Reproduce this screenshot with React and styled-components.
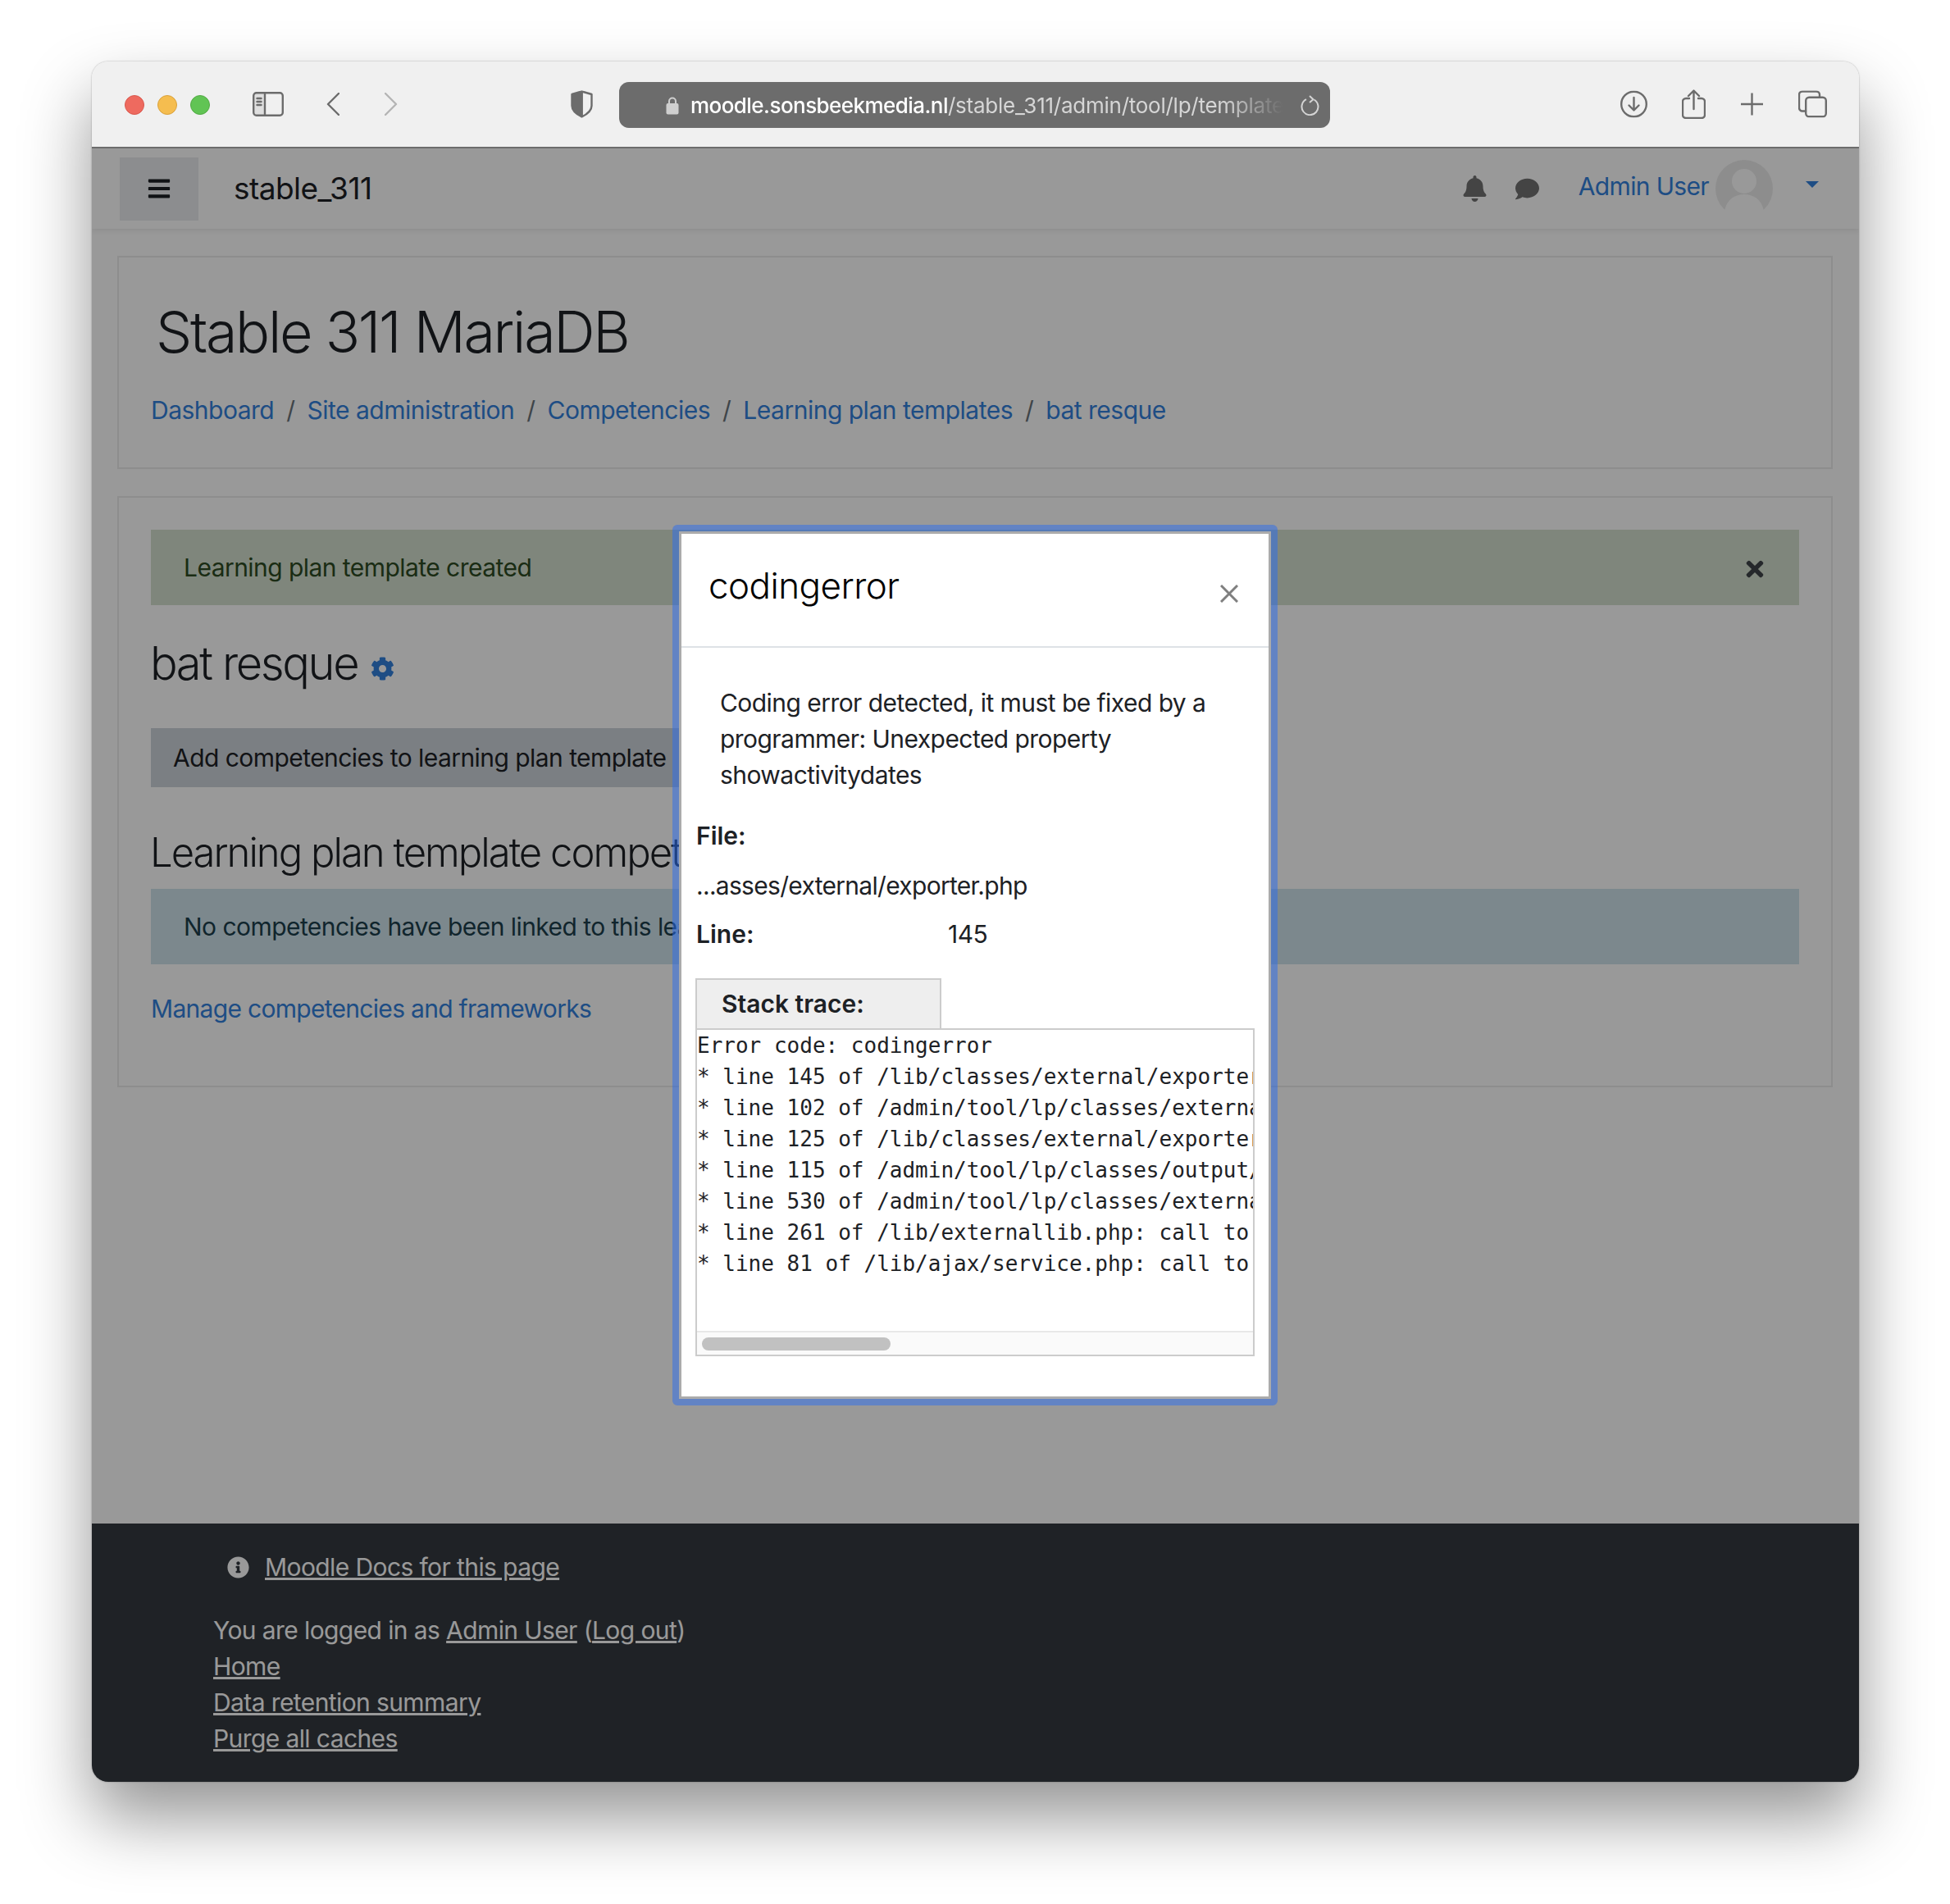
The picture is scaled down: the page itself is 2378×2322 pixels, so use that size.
import React from "react";
import styled, { createGlobalStyle } from "styled-components";
import { FaBars, FaBell, FaCog, FaComment, FaInfoCircle, FaTimes } from "react-icons/fa";

const GlobalStyle = createGlobalStyle`
  html, body {
    margin: 0;
    background: #ffffff;
  }
  * {
    box-sizing: border-box;
  }
  body {
    font-family: Inter, "Noto Sans", sans-serif;
    font-size: 30px;
    line-height: 44px;
    letter-spacing: -0.55px;
    color: #1d2125;
  }
`;

const crumbs = [
  "Dashboard",
  "Site administration",
  "Competencies",
  "Learning plan templates",
  "bat resque",
];

const traceLines = [
  "Error code: codingerror",
  "* line 145 of /lib/classes/external/exporter.php: call to debugging()",
  "* line 102 of /admin/tool/lp/classes/external/template_exporter.php: call to exporter",
  "* line 125 of /lib/classes/external/exporter.php: call to get_other_values()",
  "* line 115 of /admin/tool/lp/classes/output/manage_templates_page.php: call to export()",
  "* line 530 of /admin/tool/lp/classes/external.php: call to export_for_template()",
  "* line 261 of /lib/externallib.php: call to tool_lp\\external::list_templates()",
  "* line 81 of /lib/ajax/service.php: call to external_api::call_external_function()",
];

const App = () => {
  return (
    <Page>
      <GlobalStyle />
      <Window>
        <TitleBar>
          <Lights>
            <Light $color="#ee6a5f" $edge="#d9574d" />
            <Light $color="#f5bd4f" $edge="#d9a13c" />
            <Light $color="#61c454" $edge="#52a944" />
          </Lights>
          <ChromeIcon width="38" height="30" viewBox="0 0 38 30" $left={308}>
            <rect x="1.2" y="1.2" width="35.6" height="27.6" rx="3.5" />
            <path d="M1.2 4.5a3.3 3.3 0 0 1 3.3-3.3H15v27.6H4.5a3.3 3.3 0 0 1-3.3-3.3z" fill="#6c6c6c" fillOpacity=".12" stroke="none" />
            <path d="M15 1.2v27.6M5.5 8h5M5.5 12h5M5.5 16h5" />
          </ChromeIcon>
          <ChromeIcon width="16" height="28" viewBox="0 0 16 28" $left={398}>
            <path d="M15 1 2 14l13 13" />
          </ChromeIcon>
          <ChromeIcon width="16" height="28" viewBox="0 0 16 28" $left={469} $faded>
            <path d="m1 1 13 13L1 27" />
          </ChromeIcon>
          <ChromeIcon width="27" height="33" viewBox="0 0 27 33" $left={696}>
            <path d="M13.5 1 1.5 4.5v14c0 6 6 10.500 12 13.500z" fill="#6c6c6c" />
            <path d="M13.500 1l12 3.500v14c0 6-6 10.500-12 13.500z" />
          </ChromeIcon>
          <UrlBar>
            <LockIcon width="16" height="23" viewBox="0 0 16 23">
              <path d="M4 10V6.500a4 4 0 0 1 8 0V10" fill="none" stroke="#cfcfcf" strokeWidth="2" />
              <rect x="0.500" y="9" width="15" height="13.500" rx="2" fill="#cfcfcf" />
            </LockIcon>
            <UrlText>
              <UrlHost>moodle.sonsbeekmedia.nl</UrlHost>/stable_311/admin/tool/lp/templatecompetencies.php
            </UrlText>
            <ReloadIcon width="24" height="25" viewBox="0 0 24 25">
              <path d="M16.500 5.500A10 10 0 1 1 7 5.200" fill="none" stroke="#d4d4d4" strokeWidth="2" />
              <path d="m11 1 4.500 4.200L11 9" fill="none" stroke="#d4d4d4" strokeWidth="2" />
            </ReloadIcon>
          </UrlBar>
          <ChromeIcon width="33" height="33" viewBox="0 0 33 33" $left={1976}>
            <circle cx="16.500" cy="16.500" r="15.300" />
            <path d="M16.500 8.500v15M10.500 18l6 6 6-6" />
          </ChromeIcon>
          <ChromeIcon width="29" height="36" viewBox="0 0 29 36" $left={2051}>
            <path d="M9 11H5a4 4 0 0 0-4 4v16a4 4 0 0 0 4 4h19a4 4 0 0 0 4-4V15a4 4 0 0 0-4-4h-4" />
            <path d="M14.500 24V2M8 8l6.500-6.500L21 8" />
          </ChromeIcon>
          <ChromeIcon width="27" height="27" viewBox="0 0 27 27" $left={2123}>
            <path d="M13.500 0v27M0 13.500h27" />
          </ChromeIcon>
          <ChromeIcon width="35" height="33" viewBox="0 0 35 33" $left={2193}>
            <path d="M9 25H5a4 4 0 0 1-4-4V5a4 4 0 0 1 4-4h17a4 4 0 0 1 4 4v3" />
            <rect x="9.200" y="8.200" width="24.600" height="23.600" rx="4" />
          </ChromeIcon>
        </TitleBar>
        <Viewport>
          <Navbar>
            <MenuButton>
              <FaBars />
            </MenuButton>
            <Brand>stable_311</Brand>
            <NavRight>
              <NavIcon $width={29} $height={32}>
                <FaBell />
              </NavIcon>
              <NavIcon $width={33} $height={29} $gap={33}>
                <FaComment />
              </NavIcon>
              <UserName>Admin User</UserName>
              <Avatar width="70" height="70" viewBox="0 0 70 70">
                <circle cx="35" cy="35" r="35" fill="#ececec" />
                <circle cx="35" cy="26" r="15" fill="#ffffff" />
                <path d="M11 63c2-14 12-21 24-21s22 7 24 21a35 35 0 0 1-48 0z" fill="#ffffff" />
              </Avatar>
              <Caret />
            </NavRight>
          </Navbar>
          <Main>
            <HeaderCard>
              <SiteTitle>Stable 311 MariaDB</SiteTitle>
              <Breadcrumb>
                {crumbs.map((crumb, index) => (
                  <React.Fragment key={crumb}>
                    {index > 0 && <Separator>/</Separator>}
                    <CrumbLink>{crumb}</CrumbLink>
                  </React.Fragment>
                ))}
              </Breadcrumb>
            </HeaderCard>
            <ContentCard>
              <Alert $bg="#d4dfcf" $color="#2c4a22">
                Learning plan template created
                <AlertClose>
                  <FaTimes />
                </AlertClose>
              </Alert>
              <PlanTitle>
                bat resque
                <CogIcon>
                  <FaCog />
                </CogIcon>
              </PlanTitle>
              <AddButton>Add competencies to learning plan template</AddButton>
              <SectionTitle>Learning plan template competencies</SectionTitle>
              <Alert $bg="#cfe3eb" $color="#1c3f4c">
                No competencies have been linked to this learning plan template.
              </Alert>
              <ManageLink>Manage competencies and frameworks</ManageLink>
            </ContentCard>
          </Main>
          <Footer>
            <DocsRow>
              <FaInfoCircle />
              <FooterLink>Moodle Docs for this page</FooterLink>
            </DocsRow>
            <FooterLine>
              You are logged in as <FooterLink>Admin User</FooterLink> (<FooterLink>Log out</FooterLink>)
            </FooterLine>
            <FooterLine>
              <FooterLink>Home</FooterLink>
            </FooterLine>
            <FooterLine>
              <FooterLink>Data retention summary</FooterLink>
            </FooterLine>
            <FooterLine>
              <FooterLink>Purge all caches</FooterLink>
            </FooterLine>
          </Footer>
          <Backdrop />
          <Modal>
            <ModalInner>
              <ModalHeader>
                <ModalTitle>codingerror</ModalTitle>
                <ModalClose width="22" height="22" viewBox="0 0 22 22">
                  <path d="M1 1l20 20M21 1 1 21" />
                </ModalClose>
              </ModalHeader>
              <ModalBody>
                <Message>
                  Coding error detected, it must be fixed by a programmer: Unexpected property
                  showactivitydates
                </Message>
                <Label>File:</Label>
                <FilePath>...asses/external/exporter.php</FilePath>
                <LineRow>
                  <LineLabel>Line:</LineLabel>
                  145
                </LineRow>
                <TraceTab>Stack trace:</TraceTab>
                <TraceBox>
                  <TraceText>
                    {traceLines.map((line) => (
                      <TraceLine key={line}>{line}</TraceLine>
                    ))}
                  </TraceText>
                  <ScrollTrack>
                    <ScrollThumb />
                  </ScrollTrack>
                </TraceBox>
              </ModalBody>
            </ModalInner>
          </Modal>
        </Viewport>
      </Window>
    </Page>
  );
};

const Page = styled.div`
  width: 2378px;
  height: 2322px;
  padding: 75px 111px 149px 112px;
  overflow: hidden;
  background: #ffffff;
`;
const Window = styled.div`
  display: flex;
  flex-direction: column;
  height: 100%;
  border-radius: 20px;
  overflow: hidden;
  box-shadow: 0 44px 84px rgba(0, 0, 0, 0.42), 0 0 2px rgba(0, 0, 0, 0.35);
`;
const TitleBar = styled.div`
  position: relative;
  flex: none;
  height: 106px;
  background: #f0f0f0;
  border-bottom: 2px solid #6d6d6d;
`;
const Lights = styled.div`
  position: absolute;
  left: 40px;
  top: 41px;
  display: flex;
  gap: 16px;
`;
const Light = styled.span`
  width: 24px;
  height: 24px;
  border-radius: 50%;
  background: ${(p) => p.$color};
  border: 1px solid ${(p) => p.$edge};
`;
const ChromeIcon = styled.svg`
  position: absolute;
  left: ${(p) => p.$left - 112}px;
  top: 50%;
  transform: translateY(-50%);
  fill: none;
  stroke: ${(p) => (p.$faded ? "#b5b5b5" : "#6c6c6c")};
  stroke-width: 2.4;
  stroke-linecap: round;
  stroke-linejoin: round;
`;
const UrlBar = styled.div`
  position: absolute;
  left: 643px;
  top: 25px;
  display: flex;
  align-items: center;
  width: 867px;
  height: 56px;
  padding-left: 57px;
  border-radius: 12px;
  background: #6c6c6c;
`;
const LockIcon = styled.svg`
  flex: none;
`;
const UrlText = styled.div`
  width: 722px;
  margin: 2px 0 0 14px;
  overflow: hidden;
  white-space: nowrap;
  font-size: 26px;
  font-weight: 400;
  letter-spacing: -0.25px;
  color: #d6d6d6;
  mask-image: linear-gradient(to right, #000 90%, transparent 100%);
`;
const UrlHost = styled.span`
  font-weight: 500;
  letter-spacing: -0.55px;
  color: #ffffff;
`;
const ReloadIcon = styled.svg`
  flex: none;
  margin-left: 22px;
`;
const Viewport = styled.div`
  position: relative;
  flex: 1;
  display: flex;
  flex-direction: column;
  background: #ffffff;
`;
const Navbar = styled.div`
  display: flex;
  align-items: center;
  flex: none;
  height: 98px;
  padding: 0 49px 0 34px;
  box-shadow: 0 3px 6px rgba(0, 0, 0, 0.07);
`;
const MenuButton = styled.div`
  display: flex;
  align-items: center;
  justify-content: center;
  width: 96px;
  height: 77px;
  background: #e9ecef;
  font-size: 30px;
  color: #1d2125;
`;
const Brand = styled.div`
  margin-left: 43px;
  font-size: 37px;
  color: #1d2125;
`;
const NavRight = styled.div`
  display: flex;
  align-items: center;
  margin-left: auto;
`;
const NavIcon = styled.span`
  display: flex;
  margin-left: ${(p) => p.$gap || 0}px;
  color: #727272;

  svg {
    width: ${(p) => p.$width}px;
    height: ${(p) => p.$height}px;
  }
`;
const UserName = styled.span`
  margin-left: 46px;
  margin-top: -6px;
  letter-spacing: -0.65px;
  color: #3380dc;
`;
const Avatar = styled.svg`
  margin-left: 8px;
`;
const Caret = styled.span`
  width: 0;
  height: 0;
  margin: -10px 0 0 40px;
  border-style: solid;
  border-width: 8px 8px 0;
  border-color: #3380dc transparent transparent;
`;
const Main = styled.main`
  flex: 1;
  padding: 33px 32px 0 31px;
`;
const HeaderCard = styled.section`
  height: 260px;
  padding: 49px 39px 0;
  border: 2px solid #ececec;
`;
const SiteTitle = styled.h1`
  margin: 0 0 0 6px;
  font-size: 70px;
  line-height: 84px;
  font-weight: 270;
  letter-spacing: -2.3px;
`;
const Breadcrumb = styled.nav`
  display: flex;
  align-items: center;
  margin-top: 31px;
`;
const CrumbLink = styled.a`
  letter-spacing: -0.5px;
  color: #3380dc;
`;
const Separator = styled.span`
  padding: 0 15px;
  color: #6a737b;
`;
const ContentCard = styled.section`
  height: 721px;
  margin-top: 33px;
  padding: 39px 39px 0;
  border: 2px solid #ececec;
`;
const Alert = styled.div`
  position: relative;
  height: 92px;
  padding: 24px 40px;
  background: ${(p) => p.$bg};
  color: ${(p) => p.$color};
`;
const AlertClose = styled.span`
  position: absolute;
  right: 39px;
  top: 33px;
  display: flex;
  font-size: 30px;
  color: #3f4448;
`;
const PlanTitle = styled.h2`
  display: flex;
  align-items: center;
  height: 68px;
  margin: 37px 0 0 -1px;
  font-size: 56px;
  line-height: 68px;
  font-weight: 270;
  letter-spacing: -2.4px;
`;
const CogIcon = styled.span`
  display: flex;
  margin: 12px 0 0 16px;
  font-size: 29px;
  color: #3380dc;
`;
const AddButton = styled.div`
  display: inline-flex;
  align-items: center;
  height: 72px;
  margin-top: 45px;
  padding: 0 27px;
  background: #ced4da;
`;
const SectionTitle = styled.h3`
  height: 74px;
  margin: 50px 0 0 -1px;
  font-size: 49px;
  line-height: 60px;
  font-weight: 270;
  letter-spacing: -2px;
  white-space: nowrap;
`;
const ManageLink = styled.a`
  display: block;
  margin-top: 32px;
  letter-spacing: -0.7px;
  color: #3380dc;
`;
const Footer = styled.footer`
  flex: none;
  height: 315px;
  padding: 31px 0 0 148px;
  letter-spacing: -0.6px;
  background: #343a40;
  color: #ffffff;
`;
const DocsRow = styled.div`
  display: flex;
  align-items: center;
  gap: 19px;
  margin: 0 0 33px 17px;

  svg {
    width: 27px;
    height: 27px;
  }
`;
const FooterLine = styled.div``;
const FooterLink = styled.a`
  text-decoration: underline;
  color: #ffffff;
`;
const Backdrop = styled.div`
  position: absolute;
  inset: 0;
  background: rgba(0, 0, 0, 0.4);
`;
const Modal = styled.div`
  position: absolute;
  left: 708px;
  top: 459px;
  width: 738px;
  height: 1074px;
  border: 8px solid rgba(43, 109, 239, 0.5);
  border-radius: 6px;
`;
const ModalInner = styled.div`
  height: 100%;
  border: 3px solid #ababab;
  background: #ffffff;
`;
const ModalHeader = styled.div`
  position: relative;
  height: 139px;
  padding: 36px 33px 0;
  border-bottom: 2px solid #dee2e6;
`;
const ModalTitle = styled.h5`
  margin: 0;
  font-size: 44px;
  line-height: 54px;
  font-weight: 270;
  color: #000000;
`;
const ModalClose = styled.svg`
  position: absolute;
  right: 37px;
  top: 62px;
  fill: none;
  stroke: #7f7f7f;
  stroke-width: 3;
`;
const ModalBody = styled.div`
  padding: 45px 16px 0 18px;
`;
const Message = styled.p`
  margin: 0 29px;
`;
const Label = styled.div`
  margin-top: 30px;
  font-weight: 600;
  letter-spacing: 0;
`;
const FilePath = styled.div`
  margin-top: 17px;
  letter-spacing: -0.7px;
`;
const LineRow = styled.div`
  display: flex;
  margin-top: 15px;
`;
const LineLabel = styled.span`
  width: 307px;
  font-weight: 600;
  letter-spacing: 0;
`;
const TraceTab = styled.div`
  width: 300px;
  height: 61px;
  margin: 32px 0 0 -1px;
  padding: 7px 0 0 30px;
  background: #eeeeee;
  border: 2px solid #cccccc;
  border-bottom: 0;
  font-weight: 600;
  letter-spacing: 0;
`;
const TraceBox = styled.div`
  display: flex;
  flex-direction: column;
  width: 682px;
  height: 400px;
  margin-left: -1px;
  border: 2px solid #cccccc;
`;
const TraceText = styled.div`
  flex: 1;
  padding: 0;
  overflow: hidden;
  font-family: "DejaVu Sans Mono", monospace;
  font-size: 26px;
  line-height: 38px;
  letter-spacing: 0;
`;
const TraceLine = styled.div`
  white-space: pre;
`;
const ScrollTrack = styled.div`
  flex: none;
  height: 29px;
  padding: 6px 0 0 6px;
  background: #fafafa;
  border-top: 2px solid #e8e8e8;
`;
const ScrollThumb = styled.div`
  width: 230px;
  height: 16px;
  border-radius: 8px;
  background: #c1c1c1;
`;

export default App;
